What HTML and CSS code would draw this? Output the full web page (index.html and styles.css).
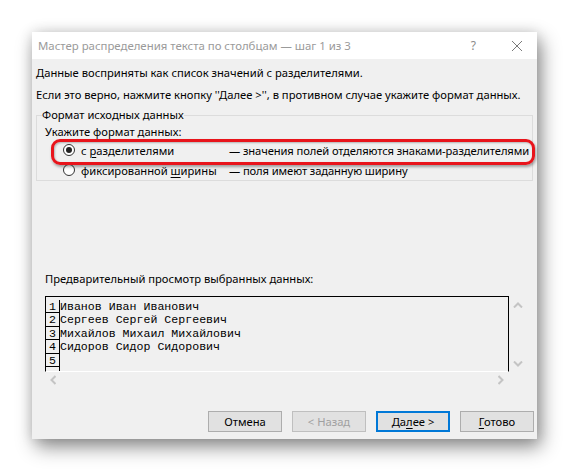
FILE: index.html
```html
<!DOCTYPE html>
<html lang="ru">
<head>
<meta charset="utf-8">
<link rel="stylesheet" href="styles.css">
</head>
<body>
<div class="dialog">
  <div class="titlebar">
    <span class="title">Мастер распределения текста по столбцам — шаг 1 из 3</span>
    <span class="tb-help">?</span>
    <svg class="tb-close" width="12" height="12" viewBox="0 0 12 12"><path d="M1 1L11 11M11 1L1 11" stroke="#7a7a7a" stroke-width="1"/></svg>
  </div>
  <div class="content">
    <p class="line l1">Данные восприняты как список значений с разделителями.</p>
    <p class="line l2">Если это верно, нажмите кнопку ''Далее &gt;'', в противном случае укажите формат данных.</p>
    <fieldset class="group">
      <legend class="legend">Формат исходных данных</legend>
      <div class="prompt">Укажите формат данных:</div>
      <div class="opt">
        <span class="radio checked"></span>
        <span class="opt-name">с <u>р</u>азделителями</span>
        <span class="opt-desc">— значения полей отделяются знаками-разделителями</span>
      </div>
      <div class="opt">
        <span class="radio"></span>
        <span class="opt-name">фиксированной <u>ш</u>ирины</span>
        <span class="opt-desc">— поля имеют заданную ширину</span>
      </div>
    </fieldset>
    <div class="preview-label">Предварительный просмотр выбранных данных:</div>
    <div class="preview">
      <div class="pbox">
        <div class="prow"><span class="num">1</span><span class="txt">Иванов Иван Иванович</span></div>
        <div class="prow"><span class="num">2</span><span class="txt">Сергеев Сергей Сергеевич</span></div>
        <div class="prow"><span class="num">3</span><span class="txt">Михайлов Михаил Михайлович</span></div>
        <div class="prow"><span class="num">4</span><span class="txt">Сидоров Сидор Сидорович</span></div>
        <div class="prow"><span class="num">5</span><span class="txt"></span></div>
        <div class="prow tail"><span class="num"></span><span class="txt"></span></div>
      </div>
      <div class="vscroll">
        <svg width="10" height="6" viewBox="0 0 10 6"><path d="M1 5.5L5 1.5L9 5.5" fill="none" stroke="#c4c4c4" stroke-width="2"/></svg>
        <svg width="10" height="6" viewBox="0 0 10 6"><path d="M1 0.5L5 4.5L9 0.5" fill="none" stroke="#c4c4c4" stroke-width="2"/></svg>
      </div>
      <div class="hscroll">
        <svg width="6" height="10" viewBox="0 0 6 10"><path d="M5.5 1L1.5 5L5.5 9" fill="none" stroke="#c4c4c4" stroke-width="2"/></svg>
        <svg width="6" height="10" viewBox="0 0 6 10"><path d="M0.5 1L4.5 5L0.5 9" fill="none" stroke="#c4c4c4" stroke-width="2"/></svg>
      </div>
    </div>
    <div class="buttons">
      <button class="btn">Отмена</button>
      <button class="btn disabled">&lt; Назад</button>
      <button class="btn default">Да<u>л</u>ее &gt;</button>
      <button class="btn"><u>Г</u>отово</button>
    </div>
  </div>
  <div class="highlight"></div>
</div>
</body>
</html>
```
FILE: styles.css
```css
* { box-sizing: border-box; }
html, body { margin: 0; padding: 0; background: #ffffff; }
body {
  font-family: "Noto Sans", "Open Sans", sans-serif;
  font-size: 11.2px;
  color: #000;
  width: 569px;
  height: 471px;
  overflow: hidden;
}
.dialog {
  position: relative;
  margin: 32px 0 0 32px;
  width: 505px;
  height: 407px;
  background: #f0f0f0;
  box-shadow: 4px 8px 18px rgba(0,0,0,0.45), 0 0 12px rgba(0,0,0,0.12);
  display: flex;
  flex-direction: column;
}
.titlebar {
  height: 27px;
  background: #ffffff;
  display: flex;
  align-items: center;
  padding-left: 6px;
}
.title {
  color: #9a9a9a;
  font-size: 11.4px;
  flex: 1;
}
.tb-help {
  color: #8a8a8a;
  font-size: 12px;
  margin-right: 35px;
}
.tb-close { margin-right: 14px; }
.content {
  flex: 1;
  display: flex;
  flex-direction: column;
  padding: 6px 0 0 4px;
}
.line { margin: 0; line-height: 16px; }
.l2 { margin-top: 6px; }
.group {
  margin: 4px 0 0 0;
  width: 497px;
  border: 1px solid #dcdcdc;
  padding: 0 0 0 8px;
  min-width: 0;
}
.legend {
  padding: 0;
  margin-left: -3px;
  line-height: 16px;
}
.prompt { line-height: 16px; margin-top: 1px; }
.opt {
  display: flex;
  align-items: center;
  height: 20px;
  margin-left: 18px;
  white-space: nowrap;
}
.radio {
  width: 12px;
  height: 12px;
  border-radius: 50%;
  border: 1px solid #333;
  background: #fff;
  margin-right: 6px;
  display: flex;
  align-items: center;
  justify-content: center;
  flex-shrink: 0;
}
.radio.checked::after {
  content: "";
  width: 6px;
  height: 6px;
  border-radius: 50%;
  background: #222;
}
.opt-name { width: 148px; flex-shrink: 0; }
.opt-desc { flex-shrink: 0; letter-spacing: -0.1px; }
u { text-decoration: underline; text-underline-offset: 2px; }
.preview-label {
  margin: 90px 0 0 9px;
  line-height: 16px;
}
.preview {
  margin: 9px 0 0 9px;
  display: grid;
  grid-template-columns: 464px 17px;
  grid-template-rows: 76px 15px;
}
.pbox {
  border-top: 1px solid #000;
  border-left: 1px solid #000;
  border-right: 1px solid #000;
  border-bottom: 1px solid #ffffff;
  padding-top: 3px;
  display: flex;
  flex-direction: column;
  font-family: "Liberation Mono", "Courier New", monospace;
  font-size: 11.6px;
  overflow: hidden;
}
.prow {
  display: flex;
  height: 13.4px;
  line-height: 13px;
}
.prow.tail { flex: 1; }
.num {
  width: 14px;
  border-right: 1px solid #000;
  border-bottom: 1px solid #000;
  text-align: center;
  flex-shrink: 0;
}
.prow.tail .num { border-bottom: none; }
.txt { white-space: pre; }
.vscroll {
  display: flex;
  flex-direction: column;
  justify-content: space-between;
  align-items: center;
  padding: 6px 0 5px 0;
}
.hscroll {
  grid-column: 1 / 2;
  display: flex;
  justify-content: space-between;
  align-items: center;
  padding: 0 5px 0 5px;
}
.buttons {
  margin-top: auto;
  margin-bottom: 7px;
  display: flex;
  justify-content: flex-end;
  gap: 10px;
  padding-right: 3px;
}
.btn {
  width: 74px;
  height: 21px;
  background: #e1e1e1;
  border: 1px solid #adadad;
  font-family: inherit;
  font-size: 11.2px;
  color: #000;
  padding: 0;
}
.btn.disabled { color: #a0a0a0; border-color: #bfbfbf; }
.btn.default { border: 2px solid #0078d7; }
.highlight {
  position: absolute;
  left: 19px;
  top: 107px;
  width: 484px;
  height: 26px;
  border: 3px solid #e8141b;
  border-radius: 9px;
  box-shadow: 1px 2px 3px rgba(0,0,0,0.35), inset 1px 1px 2px rgba(0,0,0,0.25);
  pointer-events: none;
}
```
